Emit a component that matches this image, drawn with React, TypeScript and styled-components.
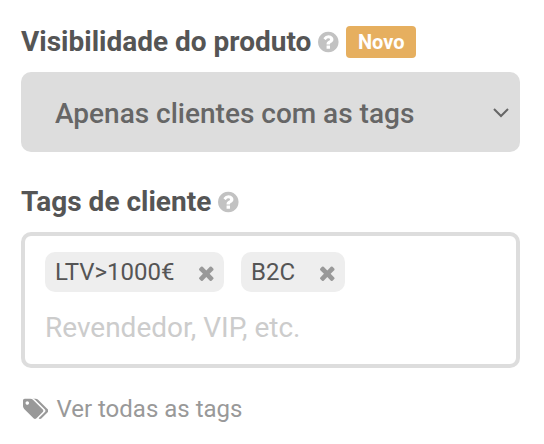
import React, { useState } from "react";
import styled, { createGlobalStyle } from "styled-components";

const GlobalStyle = createGlobalStyle`
  *, *::before, *::after { box-sizing: border-box; }
  body {
    margin: 0;
    background: #fff;
    color: #555;
    font-family: Roboto, "Liberation Sans", sans-serif;
  }
  button, input, select { font: inherit; color: inherit; }
`;

const Form = styled.form`
  display: flex;
  flex-direction: column;
  padding: 24px 24px 16px 21px;
`;

const Field = styled.div`
  display: flex;
  flex-direction: column;
  gap: 12px;
  margin-bottom: 32px;
`;

const LabelRow = styled.div`
  display: flex;
  align-items: center;
  gap: 7px;
  height: 36px;
`;

const Label = styled.label`
  font-size: 28px;
  line-height: 36px;
  font-weight: 700;
`;

const HelpButton = styled.button`
  display: flex;
  padding: 0;
  border: 0;
  background: none;
  color: #c2c2c2;
  cursor: help;
`;

const Icon = styled.svg<{ $size: number }>`
  display: block;
  height: ${({ $size }) => $size}px;
  width: auto;
  fill: currentColor;
`;

const Badge = styled.span`
  padding: 0 12px;
  border-radius: 4px;
  background: #e6af5f;
  color: #fff;
  font-size: 20px;
  line-height: 32px;
  font-weight: 700;
`;

const SelectBox = styled.div`
  display: grid;
  align-items: center;
  border-radius: 10px;
  background: #ddd;
  color: #666;

  > * { grid-area: 1 / 1; }
`;

const Select = styled.select`
  appearance: none;
  width: 100%;
  height: 80px;
  padding: 2px 48px 0 34px;
  border: 0;
  border-radius: 10px;
  background: transparent;
  font-size: 28px;
  font-weight: 500;
`;

const Chevron = styled.svg`
  justify-self: end;
  width: 16px;
  height: 10px;
  margin: 2px 11px 0 0;
  fill: none;
  stroke: #666;
  stroke-width: 2;
  pointer-events: none;
`;

const TagBox = styled.div`
  display: flex;
  flex-direction: column;
  gap: 16px;
  padding: 16px 20px;
  border: 4px solid #ddd;
  border-radius: 10px;
`;

const TagList = styled.ul`
  display: flex;
  flex-wrap: wrap;
  gap: 17px;
  margin: 0;
  padding: 0;
  list-style: none;
`;

const Tag = styled.li`
  display: flex;
  align-items: center;
  gap: 25px;
  height: 40px;
  padding: 0 10px;
  border-radius: 10px;
  background: #eee;
  font-size: 24px;
  line-height: 40px;
`;

const RemoveButton = styled.button`
  display: flex;
  padding: 2px 0 0;
  border: 0;
  background: none;
  color: #999;
  cursor: pointer;
`;

const TagInput = styled.input`
  width: 100%;
  height: 40px;
  padding: 0 0 2px;
  border: 0;
  outline: 0;
  background: none;
  font-size: 28px;

  &::placeholder { color: #ccc; opacity: 1; }
`;

const TagsLink = styled.a`
  display: flex;
  align-items: center;
  align-self: flex-start;
  gap: 8px;
  margin-top: -7px;
  padding-left: 2px;
  color: #999;
  font-size: 24px;
  line-height: 32px;
  text-decoration: none;
`;

const HelpIcon = () => (
  <Icon $size={24} viewBox="0 0 1536 1792" aria-hidden="true">
    <path d="M896 1376v-192q0-14-9-23t-23-9h-192q-14 0-23 9t-9 23v192q0 14 9 23t23 9h192q14 0 23-9t9-23zm256-672q0-88-55.5-163t-138.5-116-170-41q-243 0-371 213-15 24 8 42l132 100q7 6 19 6 16 0 25-12 53-68 86-92 34-24 86-24 48 0 85.5 26t37.5 59q0 38-20 61t-68 45q-63 28-115.5 86.5t-52.5 125.5v36q0 14 9 23t23 9h192q14 0 23-9t9-23q0-19 21.5-49.5t54.5-49.5q32-18 49-28.5t46-35 44.5-48 28-60.5 12.5-81zm384 192q0 209-103 385.5t-279.5 279.5-385.5 103-385.5-103-279.5-279.5-103-385.5 103-385.5 279.5-279.5 385.5-103 385.5 103 279.5 279.5 103 385.5z" />
  </Icon>
);

const RemoveIcon = () => (
  <Icon $size={22} viewBox="110 0 1188 1792" aria-hidden="true">
    <path d="M1298 1322q0 40-28 68l-136 136q-28 28-68 28t-68-28l-294-294-294 294q-28 28-68 28t-68-28l-136-136q-28-28-28-68t28-68l294-294-294-294q-28-28-28-68t28-68l136-136q28-28 68-28t68 28l294 294 294-294q28-28 68-28t68 28l136 136q28 28 28 68t-28 68l-294 294 294 294q28 28 28 68z" />
  </Icon>
);

const TagsIcon = () => (
  <Icon $size={24} viewBox="0 0 1899 1792" aria-hidden="true">
    <path d="M448 448q0-53-37.5-90.5t-90.5-37.5-90.5 37.5-37.5 90.5 37.5 90.5 90.5 37.5 90.5-37.5 37.5-90.5zm1067 576q0 53-37 90l-491 492q-39 37-91 37-53 0-90-37l-715-716q-38-37-64.5-101t-26.5-117v-416q0-52 38-90t90-38h416q53 0 117 26.5t102 64.5l715 714q37 39 37 91zm384 0q0 53-37 90l-491 492q-39 37-91 37-36 0-59-14t-53-45l470-470q37-37 37-90 0-52-37-91l-715-714q-38-38-102-64.5t-117-26.5h224q53 0 117 26.5t102 64.5l715 714q37 39 37 91z" />
  </Icon>
);

export default function App() {
  const [tags, setTags] = useState(["LTV>1000€", "B2C"]);

  return (
    <>
      <GlobalStyle />
      <Form>
        <Field>
          <LabelRow>
            <Label htmlFor="visibility">Visibilidade do produto</Label>
            <HelpButton type="button" aria-label="Ajuda: visibilidade do produto">
              <HelpIcon />
            </HelpButton>
            <Badge>Novo</Badge>
          </LabelRow>
          <SelectBox>
            <Select id="visibility">
              <option>Apenas clientes com as tags</option>
            </Select>
            <Chevron viewBox="0 0 16 10" aria-hidden="true">
              <path d="M1 1l7 7 7-7" />
            </Chevron>
          </SelectBox>
        </Field>
        <Field>
          <LabelRow>
            <Label htmlFor="tags">Tags de cliente</Label>
            <HelpButton type="button" aria-label="Ajuda: tags de cliente">
              <HelpIcon />
            </HelpButton>
          </LabelRow>
          <TagBox>
            <TagList>
              {tags.map((tag) => (
                <Tag key={tag}>
                  {tag}
                  <RemoveButton
                    type="button"
                    aria-label={`Remover ${tag}`}
                    onClick={() => setTags(tags.filter((t) => t !== tag))}
                  >
                    <RemoveIcon />
                  </RemoveButton>
                </Tag>
              ))}
            </TagList>
            <TagInput id="tags" type="text" placeholder="Revendedor, VIP, etc." />
          </TagBox>
        </Field>
        <TagsLink href="#tags">
          <TagsIcon />
          Ver todas as tags
        </TagsLink>
      </Form>
    </>
  );
}
